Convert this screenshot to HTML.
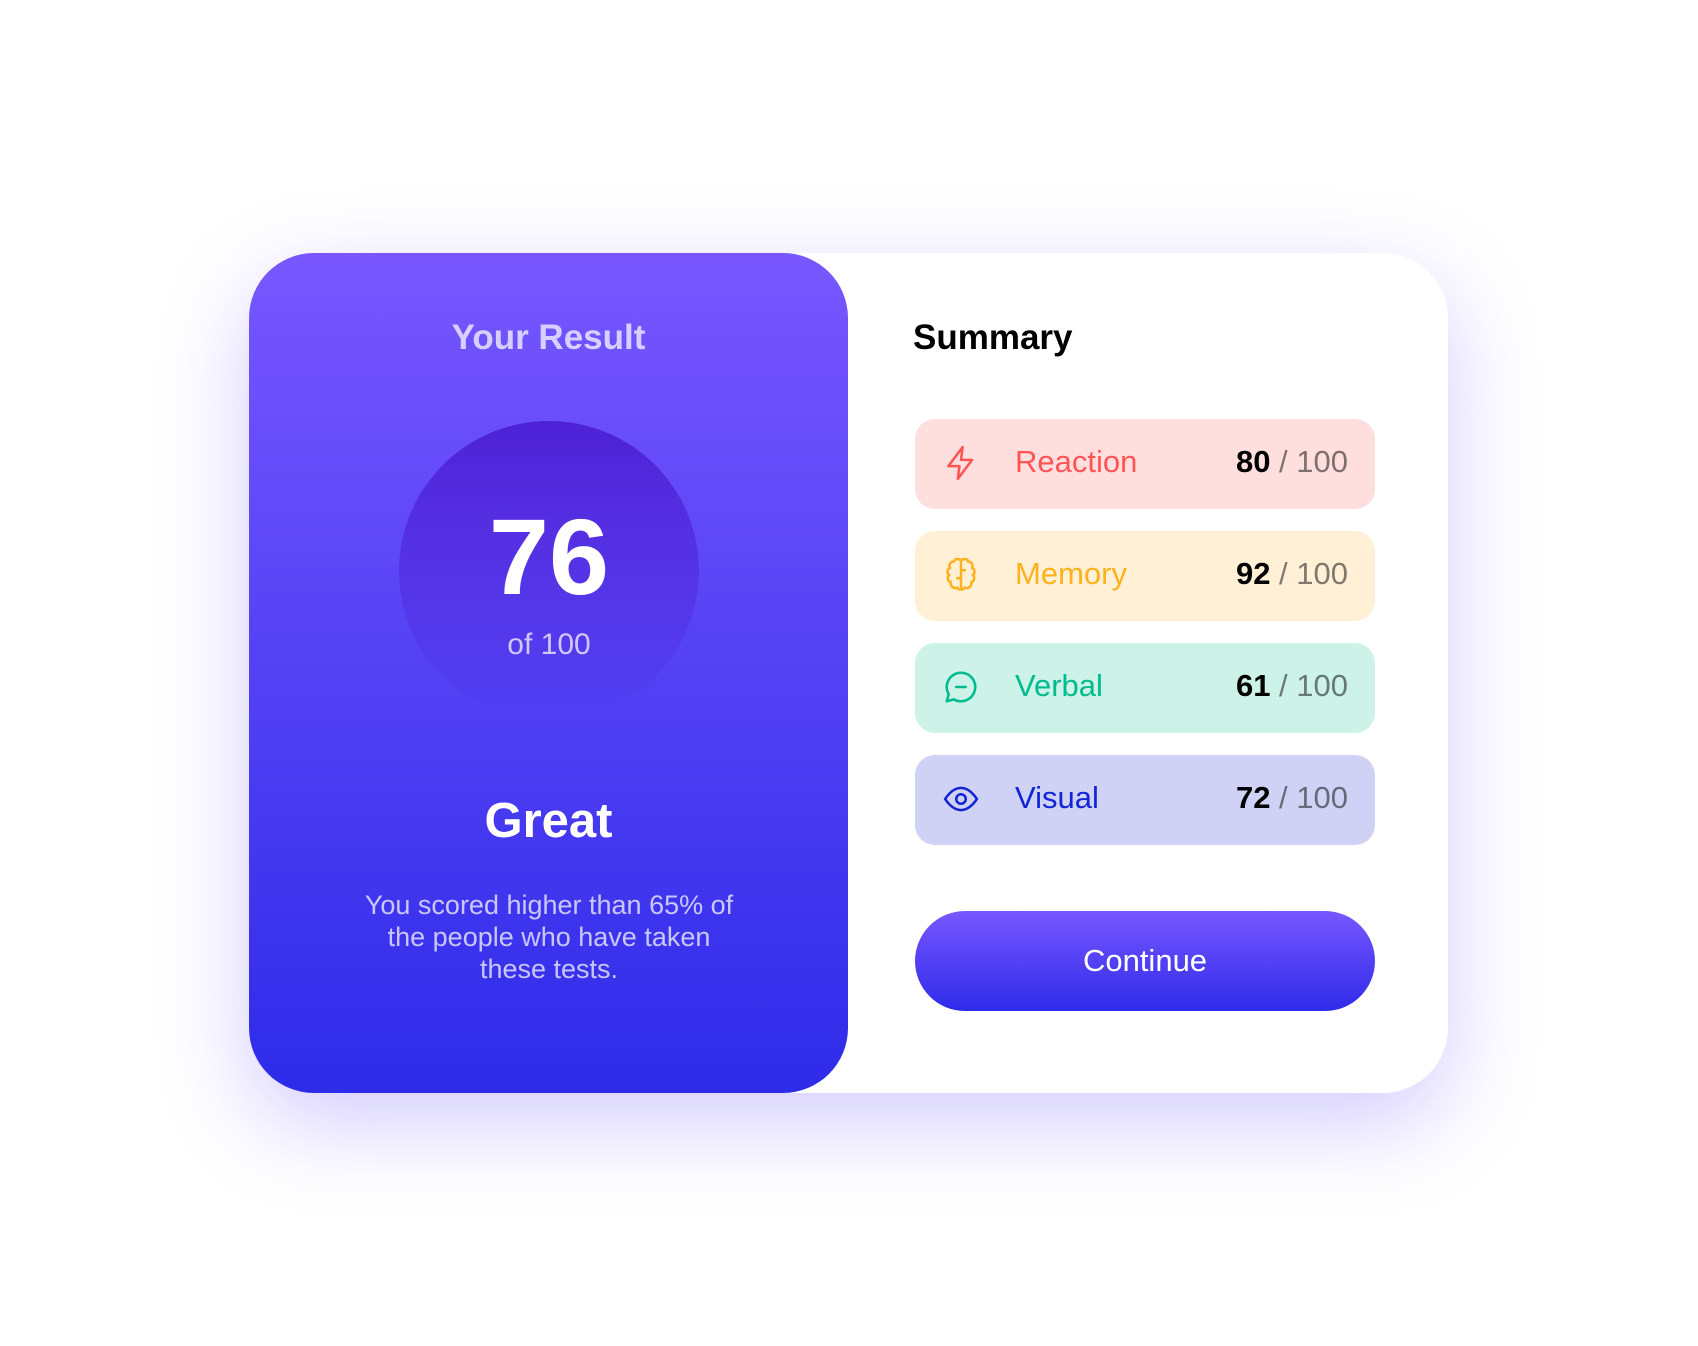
<!DOCTYPE html>
<html><head><style>
*{margin:0;padding:0;box-sizing:border-box}
body{width:1698px;height:1346px;background:#fff;font-family:"Liberation Sans",sans-serif;position:relative;overflow:hidden}
.card{position:absolute;left:249px;top:253px;width:1199px;height:840px;background:#fff;border-radius:65px;box-shadow:0 30px 90px rgba(110,87,255,0.3)}
.left{position:absolute;left:249px;top:253px;width:599px;height:840px;border-radius:65px;background:linear-gradient(180deg,#7857FF 0%,#2E2BE9 100%);color:#fff;text-align:center}
.left h2{position:absolute;top:65px;width:100%;font-size:35px;font-weight:bold;color:rgba(255,255,255,0.72)}
.circle{position:absolute;left:150px;top:168px;width:300px;height:300px;border-radius:50%;background:linear-gradient(180deg,#4D21D5 0%,rgba(36,33,207,0) 100%)}
.num{position:absolute;top:82px;width:100%;font-size:108px;font-weight:bold;color:#fff;line-height:1}
.of{position:absolute;top:207px;width:100%;font-size:30px;color:rgba(255,255,255,0.72)}
.great{position:absolute;top:540px;width:100%;font-size:49px;font-weight:bold}
.desc{position:absolute;top:636px;left:107px;width:386px;font-size:27px;line-height:32px;color:rgba(255,255,255,0.72)}
.sum{position:absolute;left:913px;top:318px;font-size:35px;font-weight:bold;color:#000}
.row{position:absolute;left:915px;width:460px;height:90px;border-radius:20px}
.row svg{position:absolute;left:27px;top:25px}
.row .l{position:absolute;left:100px;top:25px;font-size:31px}
.row .s{position:absolute;right:27px;top:25px;font-size:31px;color:rgba(0,0,0,0.5)}
.row .s b{color:#000}
.btn{position:absolute;left:915px;top:911px;width:460px;height:100px;border-radius:50px;background:linear-gradient(180deg,#7857FF,#2E2BE9);color:#fff;font-size:31px;text-align:center;line-height:100px}
</style></head><body>
<div class="card"></div>
<div class="left">
<h2>Your Result</h2>
<div class="circle"><div class="num">76</div><div class="of">of 100</div></div>
<div class="great">Great</div>
<div class="desc">You scored higher than 65% of the people who have taken these tests.</div>
</div>
<div class="sum">Summary</div>
<div class="row" style="top:419px;background:#FFDEDE"><svg width="38" height="38" viewBox="0 0 24 24" fill="none" stroke="#FF5555" stroke-width="1.6" stroke-linejoin="round"><path d="M13 2 L4 14 H11 L10 22 L19 10 H12 Z"/></svg><span class="l" style="color:#FF5555">Reaction</span><span class="s"><b>80</b> / 100</span></div>
<div class="row" style="top:531px;background:#FFF0D6"><svg width="38" height="38" viewBox="0 0 24 24" fill="none" stroke="#FFB21E" stroke-width="1.6" stroke-linecap="round"><path d="M12 3v18M12 3c-1-1.5-4-1.5-4.5.5C5.5 3.5 4 5.5 5 7.5 3 8.5 3 11 4.5 12 3 13.5 3.5 16 5.5 16.5 5 19 7.5 21 9.5 20 10.5 21.5 12 21 12 21M12 3c1-1.5 4-1.5 4.5.5 2-.0 3.5 2 2.5 4 2 1 2 3.5.5 4.5 1.5 1.5 1 4-1 4.5.5 2.5-2 4.5-4 3.5-1 1.5-2.5 1-2.5 1M12 9h2.5M12 14H9.5"/></svg><span class="l" style="color:#FFB21E">Memory</span><span class="s"><b>92</b> / 100</span></div>
<div class="row" style="top:643px;background:#CDF2E8"><svg width="38" height="38" viewBox="0 0 24 24" fill="none" stroke="#00BB8F" stroke-width="1.6" stroke-linecap="round" stroke-linejoin="round"><path d="M12 3a9 9 0 1 1-4.5 16.8L3 21l1.2-4.5A9 9 0 0 1 12 3zM9 12h6"/></svg><span class="l" style="color:#00BB8F">Verbal</span><span class="s"><b>61</b> / 100</span></div>
<div class="row" style="top:755px;background:#D0D2F5"><svg width="38" height="38" viewBox="0 0 24 24" fill="none" stroke="#1125D6" stroke-width="1.6"><path d="M2 12s4-7 10-7 10 7 10 7-4 7-10 7S2 12 2 12z"/><circle cx="12" cy="12" r="3"/></svg><span class="l" style="color:#1125D6">Visual</span><span class="s"><b>72</b> / 100</span></div>
<div class="btn">Continue</div>
</body></html>
